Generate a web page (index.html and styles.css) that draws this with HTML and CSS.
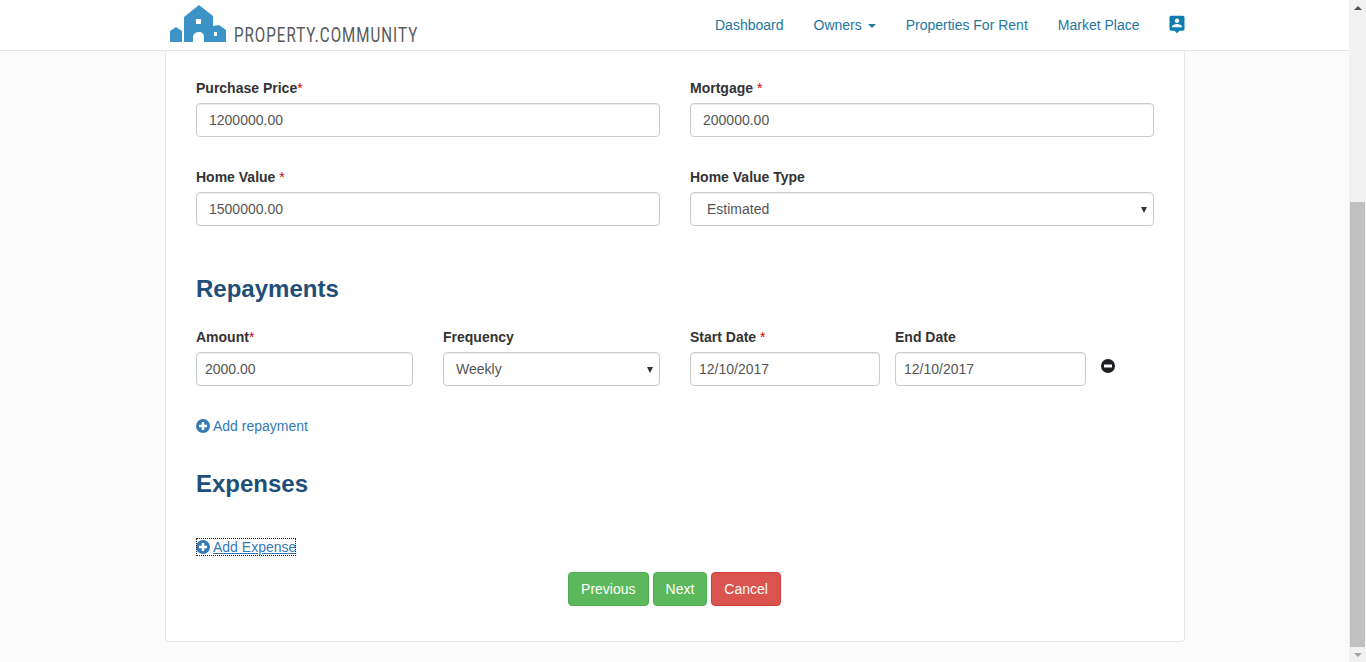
FILE: index.html
```html
<!DOCTYPE html>
<html lang="en">
<head>
    <meta charset="UTF-8">
    <title>Property.Community</title>
    <link rel="stylesheet" href="styles.css">
</head>
<body>
    <div class="page">
        <div class="viewport">
            <nav class="navbar">
                <a class="brand" href="#">
                    <svg class="brand-logo" width="58" height="40" viewBox="0 0 58 40">
                        <path fill="#3b93c8" fill-rule="evenodd" d="M1 38V27L7 23 13 27V38zM15 38V13L30 1 44 12V22L50 21 57 26V38H35V33C35 30 33 28 30 28 27 28 24 30 24 33V38zM27 15H32V20H27zM45 28H48V32H45z"/>
                    </svg>
                    <span class="brand-name">PROPERTY.COMMUNITY</span>
                </a>
                <ul class="nav-links">
                    <li><a href="#">Dashboard</a></li>
                    <li><a href="#">Owners <span class="caret"></span></a></li>
                    <li><a href="#">Properties For Rent</a></li>
                    <li><a href="#">Market Place</a></li>
                    <li>
                        <a class="nav-icon" href="#">
                            <svg width="20" height="20" viewBox="0 0 24 24">
                                <path fill="#0f7cb0" d="M19 2H5c-1.100 0-2 .9-2 2v14c0 1.100.9 2 2 2h4l3 3 3-3h4c1.100 0 2-.9 2-2V4c0-1.100-.9-2-2-2zm-7 3.300c1.490 0 2.700 1.210 2.700 2.700 0 1.490-1.210 2.700-2.700 2.700-1.490 0-2.700-1.210-2.700-2.700 0-1.490 1.210-2.700 2.700-2.700zM18 16H6v-.9c0-2 4-3.100 6-3.100s6 1.100 6 3.100v.9z"/>
                            </svg>
                        </a>
                    </li>
                </ul>
            </nav>

            <div class="panel">
                <form class="form">
                    <div class="row-two">
                        <div class="field">
                            <label>Purchase Price<span class="req">*</span></label>
                            <input class="control" type="text" value="1200000.00">
                        </div>
                        <div class="field">
                            <label>Mortgage <span class="req">*</span></label>
                            <input class="control" type="text" value="200000.00">
                        </div>
                        <div class="field">
                            <label>Home Value <span class="req">*</span></label>
                            <input class="control" type="text" value="1500000.00">
                        </div>
                        <div class="field">
                            <label>Home Value Type</label>
                            <div class="select-wrap">
                                <select class="control select-wide">
                                    <option>Estimated</option>
                                </select>
                            </div>
                        </div>
                    </div>

                    <h2 class="section-title title-repayments">Repayments</h2>
                    <div class="row-repayment">
                        <div class="field col-amount">
                            <label>Amount<span class="req">*</span></label>
                            <input class="control compact" type="text" value="2000.00">
                        </div>
                        <div class="field col-frequency">
                            <label>Frequency</label>
                            <div class="select-wrap">
                                <select class="control">
                                    <option>Weekly</option>
                                </select>
                            </div>
                        </div>
                        <div class="field col-start">
                            <label>Start Date <span class="req">*</span></label>
                            <input class="control compact" type="text" value="12/10/2017">
                        </div>
                        <div class="field col-end">
                            <label>End Date</label>
                            <input class="control compact" type="text" value="12/10/2017">
                        </div>
                        <svg class="remove-icon" width="14" height="14" viewBox="0 0 14 14">
                            <circle cx="7" cy="7" r="7" fill="#1f1f24"/>
                            <rect x="3" y="5.500" width="8" height="3" fill="#fff"/>
                        </svg>
                    </div>

                    <a class="add-link add-repayment" href="#">
                        <svg class="plus-icon" width="14" height="14" viewBox="0 0 14 14">
                            <circle cx="7" cy="7" r="7" fill="#337ab7"/>
                            <path fill="#fff" d="M5.700 3H8.300V5.700H11V8.300H8.300V11H5.700V8.300H3V5.700H5.700z"/>
                        </svg>
                        <span>Add repayment</span>
                    </a>

                    <h2 class="section-title title-expenses">Expenses</h2>

                    <a class="add-link add-expense" href="#">
                        <svg class="plus-icon" width="14" height="14" viewBox="0 0 14 14">
                            <circle cx="7" cy="7" r="7" fill="#337ab7"/>
                            <path fill="#fff" d="M5.700 3H8.300V5.700H11V8.300H8.300V11H5.700V8.300H3V5.700H5.700z"/>
                        </svg>
                        <span>Add Expense</span>
                    </a>

                    <div class="actions">
                        <button class="btn btn-success" type="button">Previous</button>
                        <button class="btn btn-success" type="button">Next</button>
                        <button class="btn btn-danger" type="button">Cancel</button>
                    </div>
                </form>
            </div>
        </div>

        <div class="scrollbar">
            <span class="arrow arrow-up"></span>
            <div class="track"><div class="thumb"></div></div>
            <span class="arrow arrow-down"></span>
        </div>
    </div>
</body>
</html>
```

FILE: styles.css
```css
html, body {
    margin: 0;
    height: 100%;
    overflow: hidden;
}
body {
    font-family: "Liberation Sans", Arial, sans-serif;
    font-size: 14px;
    line-height: 20px;
    color: #333;
    background-color: #fbfbfb;
}
.page {
    display: flex;
    height: 662px;
}
.viewport {
    flex: 1;
    min-width: 0;
}

/* top bar */
.navbar {
    display: flex;
    justify-content: space-between;
    height: 50px;
    padding: 0 163.500px 0 169px;
    background-color: #fff;
    border-bottom: 1px solid #e5e5e5;
}
.brand {
    display: flex;
    align-items: flex-end;
    padding-bottom: 6px;
    text-decoration: none;
}
.brand-logo {
    display: block;
    margin-right: 7px;
}
.brand-name {
    margin-bottom: -3px;
    font-family: "Roboto", sans-serif;
    font-size: 21px;
    line-height: 24px;
    letter-spacing: 1.400px;
    color: #58595b;
    transform: scaleX(.72);
    transform-origin: left center;
}
.nav-links {
    display: flex;
    gap: 30px;
    margin: 0;
    padding: 15px 0 0;
    list-style: none;
}
.nav-links a {
    color: #23779f;
    text-decoration: none;
}
.caret {
    display: inline-block;
    margin-left: 2px;
    vertical-align: middle;
    border-top: 4px solid #23779f;
    border-left: 4px solid transparent;
    border-right: 4px solid transparent;
}
.nav-icon svg {
    display: block;
    margin: -1px -1.500px 0 -2.500px;
}

/* panel */
.panel {
    box-sizing: border-box;
    width: 1020px;
    height: 591px;
    margin-left: 165px;
    padding: 27px 30px 0;
    background-color: #fff;
    border: 1px solid #e6e6e6;
    border-top: none;
    border-radius: 0 0 4px 4px;
}
.row-two {
    display: grid;
    grid-template-columns: 464px 464px;
    column-gap: 30px;
    row-gap: 30px;
}
label {
    display: block;
    margin-bottom: 5px;
    font-weight: bold;
}
.req {
    font-weight: normal;
    color: #c00;
}
.control {
    display: block;
    box-sizing: border-box;
    width: 100%;
    height: 34px;
    padding: 6px 12px;
    font-family: inherit;
    font-size: 14px;
    color: #555;
    background-color: #fff;
    border: 1px solid #ccc;
    border-radius: 4px;
    box-shadow: inset 0 1px 1px rgba(0,0,0,.075);
    appearance: none;
}
.control.compact {
    padding: 6px 8px;
}
.select-wide {
    padding-left: 16px;
}
.select-wrap {
    position: relative;
}
.select-wrap::after {
    content: "";
    position: absolute;
    top: 15px;
    right: 7px;
    border-top: 6px solid #333;
    border-left: 3px solid transparent;
    border-right: 3px solid transparent;
}
.section-title {
    margin: 0;
    font-size: 24px;
    line-height: 26px;
    font-weight: bold;
    color: #1f4e79;
}
.title-repayments {
    margin-top: 50px;
}
.title-expenses {
    margin-top: 35px;
}
.row-repayment {
    display: flex;
    align-items: flex-start;
    margin-top: 25px;
}
.col-amount, .col-frequency {
    width: 217px;
    margin-right: 30px;
}
.col-start {
    width: 190px;
    margin-right: 15px;
}
.col-end {
    width: 191px;
}
.remove-icon {
    margin: 32px 0 0 15px;
}
.add-link {
    display: flex;
    align-items: center;
    gap: 3px;
    width: max-content;
    color: #337ab7;
    text-decoration: none;
}
.add-repayment {
    margin-top: 30px;
}
.add-expense {
    height: 18px;
    margin-top: 41px;
    margin-bottom: 16px;
    outline: 1px dotted #222;
    outline-offset: -1px;
}
.add-expense span {
    text-decoration: underline;
}
.actions {
    display: flex;
    justify-content: center;
    gap: 4px;
    padding-right: 1px;
}
.btn {
    height: 34px;
    padding: 6px 12px;
    font-family: inherit;
    font-size: 14px;
    color: #fff;
    border: 1px solid transparent;
    border-radius: 4px;
}
.btn-success {
    background-color: #5cb85c;
    border-color: #4cae4c;
}
.btn-danger {
    background-color: #d9534f;
    border-color: #d43f3a;
}

/* window scrollbar */
.scrollbar {
    display: flex;
    flex-direction: column;
    align-items: center;
    width: 17px;
    background-color: #f1f1f1;
}
.arrow {
    flex: none;
    width: 0;
    border-left: 4px solid transparent;
    border-right: 4px solid transparent;
}
.arrow-up {
    margin: 6px 0 7px;
    border-bottom: 4px solid #505050;
}
.arrow-down {
    margin: 6px 0 5px;
    border-top: 4px solid #a3a3a3;
}
.track {
    flex: 1;
    width: 100%;
    padding-top: 185px;
    box-sizing: border-box;
}
.thumb {
    height: 100%;
    margin: 0 1px;
    background-color: #c1c1c1;
}
```
